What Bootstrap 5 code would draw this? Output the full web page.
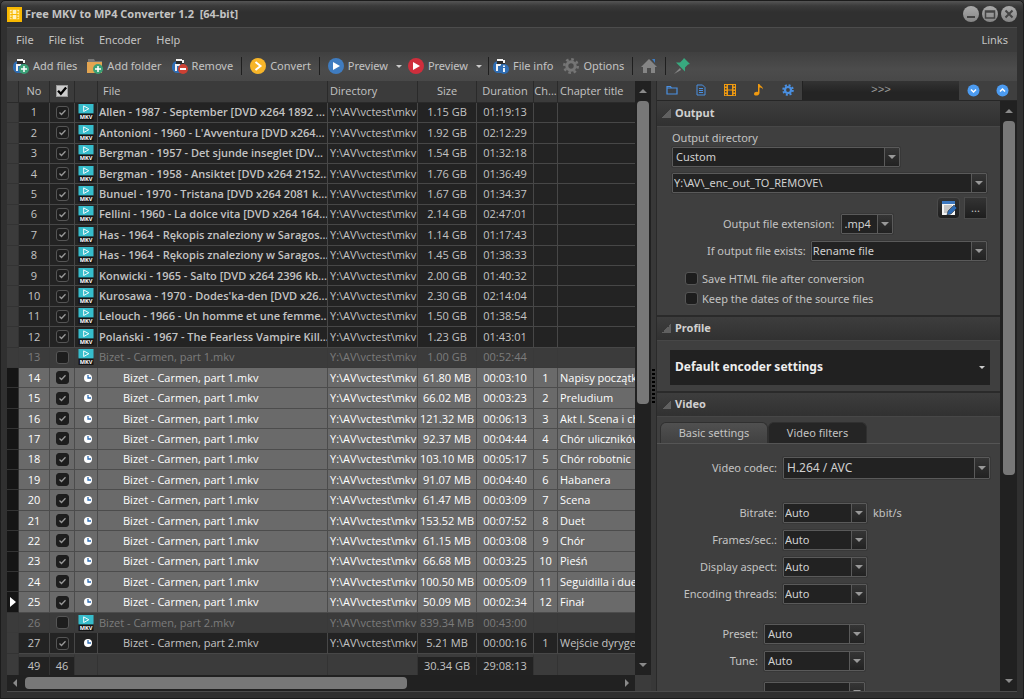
<!DOCTYPE html>
<html lang="en">
<head>
<meta charset="utf-8">
<meta name="viewport" content="width=device-width, initial-scale=1">
<title>Free MKV to MP4 Converter</title>
<link href="https://cdn.jsdelivr.net/npm/bootstrap@5.3.0/dist/css/bootstrap.min.css" rel="stylesheet">
<style>
:root{--txt:#c3c3c3;--dark:#232323;--panel:#3f3f3f}
body{background:#303030;color:var(--txt);font-family:"Noto Sans","Open Sans",sans-serif;font-size:11px;line-height:16px}
svg{display:block;flex:none}
button,select,input{font:inherit;color:inherit}
.win{border:1px solid #1c1c1c;border-radius:5px 5px 0 0;padding:0 6px 6px;background:linear-gradient(#555,#3a3a3a 5px,#303030 11px,#303030)}
.title-row{height:27px;font-weight:700;gap:3px}
.title-row span{white-space:pre}
.wbtn{width:16px;height:16px;border:0;padding:0;border-radius:50%;background:linear-gradient(#aaa,#858585)}
.client{background:var(--panel);border:solid #4c4c4c;border-width:1px 0 1px 0;min-height:0}
.menus{height:24px;background:#3b3b3b;padding:0 9px;gap:15px}
.menus a{color:var(--txt);text-decoration:none}
.tools{height:30px;background:linear-gradient(#404040,#4c4c4c 60%,#484848);padding:0 6px}
.tb{border:0;background:none;padding:0;display:flex;align-items:center;gap:4px;white-space:nowrap;height:22px}
.gapr{margin-right:10px}
.drop{padding:0 6px 0 8px}
.vsep{width:1px;height:18px;background:#1f1f1f;flex:none}
.car{border:3px solid transparent;border-top-color:#ccc;border-bottom:0;height:0;width:0}
.split{min-height:0}
.listpane{background:#3b3b3b;min-width:0}
.gridwrap{min-height:0;min-width:0;overflow:hidden}
.files{width:100%;height:100%;table-layout:fixed;border-collapse:separate;border-spacing:0;color:var(--txt);font-family:"Open Sans","Noto Sans",sans-serif}
.files th,.files td{padding:0;text-align:center;white-space:nowrap;overflow:hidden;border-right:1px solid #474747;border-bottom:1px solid #474747;line-height:16px;font-weight:400}
.files td{background:var(--dark)}
.files thead th{background:#3b3b3b;border-color:#2a2a2a;height:22px}
.files .l{text-align:left;padding-left:5px}
.files .dir{padding-left:2px}
.files .ttl{padding-left:2px}
.files th:last-child,.files td:last-child{border-right:0}
.files .nm{font-weight:600;padding-left:1px}
.files .sub{font-weight:400;padding-left:25px}
.files .ind{background:#3b3b3b;border-color:#333}
.files .sel td{background:#6a6a6a;color:#fff;border-color:#4c4c4c}
.files .sel .ind{background:#151515;border-color:#333}
.files .off td{background:#3b3b3b;color:#7c7c7c;border-color:#393939}
.files .off .nm{font-weight:400}
.files tfoot td{border-top:3px solid #3b3b3b;border-bottom:0;background:#3b3b3b;border-right-color:#333;height:21px}
.files tfoot .tot{background:#222}
.files svg{margin:auto}
.cb{appearance:none;display:block;margin:auto;width:13px;height:13px;border:1px solid #555;border-radius:3px;background:#1d1d1d center/11px no-repeat}
.cb:checked{background-image:url("data:image/svg+xml,%3Csvg xmlns='http://www.w3.org/2000/svg' viewBox='0 0 11 11'%3E%3Cpath d='M2.500 5.500l2 2 4-4.200' fill='none' stroke='%23999' stroke-width='1.300'/%3E%3C/svg%3E")}
.cb.all{width:12px;height:12px;border:1px solid #999;border-radius:0;background-color:#ccc}
.cb.all:checked{background-image:url("data:image/svg+xml,%3Csvg xmlns='http://www.w3.org/2000/svg' viewBox='0 0 11 11'%3E%3Cpath d='M1.500 5l2.700 3 5-6' fill='none' stroke='%23000' stroke-width='2.200'/%3E%3C/svg%3E")}
.sel .cb{border-color:#1d1d1d}
.vbar{background:#212121;display:flex;flex-direction:column;align-items:center;flex:none}
.bar-a,.corner{width:16px}
.bar-b{width:17px}
.thumb{background:#787878;border-radius:4px}
.vbar .thumb{width:12px}
.bar-a .thumb{height:51%}
.bar-b .thumb{height:60%}
.tri{width:0;height:0;border:4px solid transparent;flex:none}
.tri.up{border-bottom-color:#8a8a8a;border-top:0}
.tri.dn{border-top-color:#8a8a8a;border-bottom:0}
.tri.lt{border-right-color:#8a8a8a;border-left:0}
.tri.rt{border-left-color:#8a8a8a;border-right:0}
.hbar{height:16px;background:#212121;padding:0 6px}
.hbar .thumb{height:12px;width:62%}
.grip{width:6px;background:#383838;border-right:1px solid #2a2a2a;flex:none}
.grip i{width:3px;height:34px;background:repeating-linear-gradient(#000 0 2px,transparent 2px 4px)}
.side{width:360px;min-height:0;flex:none}
.nav-ic{height:20px;border-bottom:1px solid #262626}
.nav-ic button{border:0;background:none;padding:0;width:29px;height:19px;display:flex;align-items:center;justify-content:center}
.nav-ic .more{flex:1;background:linear-gradient(#333,#242424 60%);color:#999;font-family:"Liberation Mono",monospace;border-left:1px solid #222}
.formarea{min-height:0;overflow:hidden}
.sec{height:26px;margin:0;padding-left:5px;gap:4px;font-size:11px;line-height:16px;font-weight:700;color:#d0d0d0;background:linear-gradient(#3d3d3d,#313131);border-bottom:1px solid #474747}
.sec.line{border-top:2px solid #2a2a2a}
.sec i{background:linear-gradient(135deg,transparent 50%,#606060 50%);width:9px;height:9px}
.cmb{appearance:none;height:20px;padding:0 17px 0 3px;border:1px solid #5a5a5a;border-radius:1px;color:#d0d0d0;line-height:16px;outline:1px solid #383838;background:url("data:image/svg+xml,%3Csvg xmlns='http://www.w3.org/2000/svg' width='8' height='4'%3E%3Cpath d='M0 0h8l-4 4z' fill='%23999'/%3E%3C/svg%3E") right 3px center no-repeat,linear-gradient(#5a5a5a,#5a5a5a) right 14px top/1px 100% no-repeat,linear-gradient(#353535,#222) right top/14px 100% no-repeat,#222}
.cmb.tight{padding-left:1px}
.lab{text-align:right}
.sq{width:23px;height:22px;border:1px solid #4a4a4a;background:linear-gradient(#333,#1e1e1e);padding:0;display:flex;align-items:center;justify-content:center}
.outp{padding:3px 13px 0 15px;height:188px}
.odir{width:228px;margin-top:1px}
.path{margin-top:6px}
.ext{gap:6px;margin-left:51px;margin-top:-5px}
.ext .cmb{width:52px}
.exi{gap:5px;margin:7px 0 10px 35px}
.chk{gap:4px;margin:0 0 4px 13px}
.profile{height:50px;padding:9px 10px 0 13px}
.profile button{width:100%;height:35px;background:#212121;border:0;font-weight:700;font-size:12px;color:#eee;padding:0 5px}
.ptabs{padding:5px 3px 0;border-bottom:1px solid #555}
.ptabs button{border:1px solid #303030;border-bottom:0;border-radius:6px 6px 0 0;height:21px;padding:0}
.ptabs .on{width:108px;background:linear-gradient(#505050,#414141)}
.ptabs .of{width:99px;background:#252525}
.vform{padding:13px 10px 0 0}
.vrow{display:flex;align-items:center;gap:6px}
.vrow .lab{width:120px}
.codec{margin-bottom:24px}
.codec .cmb{height:22px;flex:1;font-size:12px}
.q{margin-bottom:7px}
.q .cmb{width:84px}
.last{margin-bottom:20px}
.near{margin-bottom:7px}
.near .lab{width:101px}
.near .cmb{width:101px}
.grp{margin-bottom:11px}
</style>
</head>
<body>
<div class="win vh-100 d-flex flex-column">
  <header class="title-row d-flex align-items-center">
    <svg width="15" height="15" viewBox="0 0 16 16"><path fill="#f8b800" d="M0 0h16v16H0z"/><path fill="#fff3c4" d="M3 3h10v10H3z"/><path fill="#f8b800" d="M5 3h1v10H5zM10 3h1v10h-1zM5 7.500h6v1H5zM3.500 4.500H5V6H3.500zM3.500 7.500H5V9H3.500zM3.500 10.500H5V12H3.500zM11 4.500h1.500V6H11zM11 7.500h1.500V9H11zM11 10.500h1.500V12H11z"/></svg>
    <span class="flex-grow-1">Free MKV to MP4 Converter 1.2  [64-bit]</span>
    <button class="wbtn" aria-label="Minimize"><svg width="16" height="16"><path d="M4 11h8" stroke="#444" stroke-width="2"/></svg></button>
    <button class="wbtn" aria-label="Maximize"><svg width="16" height="16"><path d="M3.500 5h9v7h-9zM3.500 6h9" fill="none" stroke="#444" stroke-width="1.500"/></svg></button>
    <button class="wbtn" aria-label="Close"><svg width="16" height="16"><path d="M4.500 4.500l7 7m0-7l-7 7" stroke="#444" stroke-width="2"/></svg></button>
  </header>
  <div class="client flex-grow-1 d-flex flex-column">
    <nav class="menus d-flex align-items-center">
      <a href="#">File</a><a href="#">File list</a><a href="#">Encoder</a><a href="#">Help</a><a href="#" class="ms-auto">Links</a>
    </nav>
    <div class="tools d-flex align-items-center" id="tools"></div>
    <div class="split d-flex flex-grow-1">
      <section class="listpane flex-grow-1 d-flex flex-column">
        <div class="split d-flex flex-grow-1">
          <div class="gridwrap flex-grow-1">
            <table class="files">
              <colgroup><col width="12"><col width="31"><col width="25"><col width="23"><col><col width="90"><col width="59"><col width="57"><col width="24"><col width="77"></colgroup>
              <thead><tr><th></th><th>No</th><th><input type="checkbox" class="cb all" checked aria-label="Select all"></th><th></th><th class="l">File</th><th class="l dir">Directory</th><th>Size</th><th>Duration</th><th>Ch...</th><th class="l ttl">Chapter title</th></tr></thead>
              <tbody id="rows"></tbody>
              <tfoot><tr><td></td><td class="tot">49</td><td class="tot">46</td><td></td><td></td><td></td><td class="tot">30.34 GB</td><td class="tot">29:08:13</td><td></td><td></td></tr></tfoot>
            </table>
          </div>
          <div class="vbar bar-a"><i class="tri up my-2"></i><div class="thumb"></div><i class="tri dn mt-auto mb-2"></i></div>
        </div>
        <div class="d-flex"><div class="hbar flex-grow-1 d-flex align-items-center"><i class="tri lt me-2"></i><div class="thumb"></div><i class="tri rt ms-auto"></i></div><div class="corner"></div></div>
      </section>
      <div class="grip d-flex align-items-center justify-content-center"><i></i></div>
      <aside class="side d-flex flex-column">
        <div class="nav-ic d-flex">
          <button aria-label="Output"><svg width="12" height="12" viewBox="0 0 12 12" fill="none" stroke="#4a90e2" stroke-width="1.200"><path d="M1 2.500h3.500l1 1.500H11v6H1zM1 4h5"/></svg></button>
          <button aria-label="Profile"><svg width="12" height="12" viewBox="0 0 12 12" fill="none" stroke="#4a90e2"><path d="M2 1h5.500L10 3.500V11H2zM4 4.500h4M4 6.500h4M4 8.500h4"/></svg></button>
          <button aria-label="Video"><svg width="12" height="12" viewBox="0 0 12 12"><path fill="#f09a10" d="M0 0h12v12H0z"/><path fill="#3f3f3f" d="M4 1h4v4.400H4zM4 6.600h4V11H4zM1 1h1.500v1.600H1zM1 4h1.500v1.600H1zM1 7h1.500v1.600H1zM1 10h1.500v1.200H1zM9.500 1H11v1.600H9.500zM9.500 4H11v1.600H9.500zM9.500 7H11v1.600H9.500zM9.500 10H11v1.200H9.500z"/></svg></button>
          <button aria-label="Audio"><svg width="12" height="12" viewBox="0 0 12 12"><path fill="#f09a10" d="M5 0h1.500c.3 2 3.500 2 3.500 5.500-.6-1.500-2-2-3.500-2V9c0 3-5.500 3.500-5.500 1C1 8 3.500 7.300 5 8z"/></svg></button>
          <button aria-label="Settings"><svg width="12" height="12" viewBox="0 0 12 12"><circle cx="6" cy="6" r="3" fill="none" stroke="#4a90e2" stroke-width="2.200"/><circle cx="6" cy="6" r="4.800" fill="none" stroke="#4a90e2" stroke-width="2" stroke-dasharray="2 1.770"/></svg></button>
          <button class="more">&gt;&gt;&gt;</button>
          <button aria-label="Expand all"><svg width="13" height="13" viewBox="0 0 13 13"><circle cx="6.500" cy="6.500" r="6" fill="#4c9bf0"/><path d="M4 5.500L6.500 8 9 5.500" fill="none" stroke="#fff" stroke-width="1.500"/></svg></button>
          <button aria-label="Collapse all"><svg width="13" height="13" viewBox="0 0 13 13"><circle cx="6.500" cy="6.500" r="6" fill="#4c9bf0"/><path d="M4 7.500L6.500 5 9 7.500" fill="none" stroke="#fff" stroke-width="1.500"/></svg></button>
        </div>
        <div class="split d-flex flex-grow-1">
          <form class="formarea flex-grow-1">
            <h2 class="sec d-flex align-items-center"><i></i>Output</h2>
            <div class="outp">
              <label for="od" class="d-block">Output directory</label>
              <select id="od" class="cmb d-block odir"><option>Custom</option></select>
              <input class="cmb tight d-block w-100 path" aria-label="Path" value="Y:\AV\_enc_out_TO_REMOVE\">
              <div class="d-flex justify-content-end gap-1 mt-1">
                <button type="button" class="sq rounded-1" aria-label="Edit"><svg width="16" height="16" viewBox="0 0 16 16"><path fill="#f4f4f4" d="M1 1h13v14H1z"/><path fill="#3c78c0" d="M1 1h13v3H1z"/><path d="M3 6h8M3 8h8M3 10h6M3 12h4" stroke="#999"/><path fill="#2d6bb5" stroke="#1c1c1c" stroke-width=".5" d="M6 15l1-4 6-6 3 3-6 6z"/></svg></button>
                <button type="button" class="sq">...</button>
              </div>
              <div class="d-flex align-items-center ext"><label for="ex" class="lab">Output file extension:</label><select id="ex" class="cmb"><option>.mp4</option></select></div>
              <div class="d-flex align-items-center exi"><label for="ei" class="lab">If output file exists:</label><select id="ei" class="cmb tight flex-grow-1"><option>Rename file</option></select></div>
              <div class="d-flex align-items-center chk"><input type="checkbox" id="c1" class="cb m-0"><label for="c1">Save HTML file after conversion</label></div>
              <div class="d-flex align-items-center chk"><input type="checkbox" id="c2" class="cb m-0"><label for="c2">Keep the dates of the source files</label></div>
            </div>
            <h2 class="sec line d-flex align-items-center"><i></i>Profile</h2>
            <div class="profile"><button type="button" class="d-flex align-items-center justify-content-between">Default encoder settings<span class="car"></span></button></div>
            <h2 class="sec line d-flex align-items-center"><i></i>Video</h2>
            <div class="ptabs d-flex"><button type="button" class="on">Basic settings</button><button type="button" class="of">Video filters</button></div>
            <div class="vform" id="vform"></div>
          </form>
          <div class="vbar bar-b"><i class="tri up my-2"></i><div class="thumb"></div><i class="tri dn mt-auto mb-2"></i></div>
        </div>
      </aside>
    </div>
  </div>
</div>
<script src="https://cdn.jsdelivr.net/npm/bootstrap@5.3.0/dist/js/bootstrap.bundle.min.js"></script>
<script>
const doc = '<path fill="#2f6db3" d="M0 9a6 6 0 0 1 5-6h4l1 12H4a6 6 0 0 1-4-6z"/><path fill="#2b2b2b" d="M4 2h8v4H4z"/><path fill="#f2f2f2" d="M4 1h6v2H4zM10 2h2v3h-2z"/><path fill="#f2f2f2" d="M3 6h2v7H3zM5 6h3v2H5z"/>';
const art = {
  addf: doc + '<circle cx="11" cy="11" r="5" fill="#3aa076"/><path d="M11 8v6M8 11h6" stroke="#fff" stroke-width="1.500"/>',
  fold: '<path fill="#777" d="M1 1h6l1 2h7v3H1z"/><path fill="#e3a551" d="M0 4h15v11H0z"/><circle cx="11" cy="11" r="5" fill="#3aa076"/><path d="M11 8v6M8 11h6" stroke="#fff" stroke-width="1.500"/>',
  rem: doc + '<circle cx="11" cy="11" r="5" fill="#cc4033"/><path d="M8 11h6" stroke="#fff" stroke-width="2"/>',
  conv: '<circle cx="8" cy="8" r="8" fill="#f7b529"/><path d="M5.500 4l5 4-5 4" fill="none" stroke="#fff" stroke-width="2"/>',
  pb: '<circle cx="8" cy="8" r="8" fill="#3f7cc0"/><path d="M5 4l7 4-7 4z" fill="#fff"/>',
  pr: '<circle cx="8" cy="8" r="8" fill="#cf2e3c"/><path d="M5 4l7 4-7 4z" fill="#fff"/>',
  info: doc + '<circle cx="11" cy="11" r="5" fill="#2f6db3"/><path d="M11 7.500v1.500M11 10v4" stroke="#fff" stroke-width="1.800"/>',
  gear: '<circle cx="8" cy="8" r="4.200" fill="none" stroke="#757575" stroke-width="3"/><circle cx="8" cy="8" r="6.700" fill="none" stroke="#757575" stroke-width="2.600" stroke-dasharray="2.630 2.630"/>',
  home: '<path fill="#858585" d="M8 1l8 8h-2v6h-4v-5H6v5H2V9H0z"/><path fill="#3f7cc0" d="M11 1h3v4z"/>',
  pin: '<path d="M6 10l-6 6 7-4z" fill="#888"/><path fill="#38a97f" d="M10 0l6 6-2 .5-3 3 0 4-9-9 4 0 3-3z"/>'
};
const ico = k => `<svg width="16" height="16" viewBox="0 0 16 16">${art[k]}</svg>`;
const sep = w => `<span class="vsep ${w}"></span>`;
const tb = (k, t, c = '') => `<button class="tb ${c}" ${t ? '' : `aria-label="${k}"`}>${ico(k)}${t}</button>`;
const caret = '<button class="tb drop" aria-label="More"><span class="car"></span></button>';
document.getElementById('tools').innerHTML =
  tb('addf', 'Add files', 'gapr') + tb('fold', 'Add folder', 'gapr') + tb('rem', 'Remove') + sep('mx-2') +
  tb('conv', 'Convert') + sep('mx-2') + tb('pb', 'Preview') + caret + tb('pr', 'Preview') + caret + sep('me-1') +
  tb('info', 'File info', 'gapr') + tb('gear', 'Options') + sep('mx-2') + tb('home', '') + sep('mx-2') + tb('pin', '');

const films = [
  ['Allen - 1987 - September [DVD x264 1892 ...', '1.15 GB', '01:19:13'],
  ["Antonioni - 1960 - L'Avventura [DVD x264...", '1.92 GB', '02:12:29'],
  ['Bergman - 1957 - Det sjunde inseglet [DV...', '1.54 GB', '01:32:18'],
  ['Bergman - 1958 - Ansiktet [DVD x264 2152...', '1.76 GB', '01:36:49'],
  ['Bunuel - 1970 - Tristana [DVD x264 2081 k...', '1.67 GB', '01:34:37'],
  ['Fellini - 1960 - La dolce vita [DVD x264 164...', '2.14 GB', '02:47:01'],
  ['Has - 1964 - Rękopis znaleziony w Saragos...', '1.14 GB', '01:17:43'],
  ['Has - 1964 - Rękopis znaleziony w Saragos...', '1.45 GB', '01:38:33'],
  ['Konwicki - 1965 - Salto [DVD x264 2396 kb...', '2.00 GB', '01:40:32'],
  ["Kurosawa - 1970 - Dodes'ka-den [DVD x26...", '2.30 GB', '02:14:04'],
  ['Lelouch - 1966 - Un homme et une femme...', '1.50 GB', '01:38:54'],
  ['Polański - 1967 - The Fearless Vampire Kill...', '1.23 GB', '01:43:01'],
  ['Bizet - Carmen, part 1.mkv', '1.00 GB', '00:52:44', 'off'],
  ['', '61.80 MB', '00:03:10', 'sel', 1, 'Napisy początkowe'],
  ['', '66.02 MB', '00:03:23', 'sel', 2, 'Preludium'],
  ['', '121.32 MB', '00:06:13', 'sel', 3, 'Akt I. Scena i chór'],
  ['', '92.37 MB', '00:04:44', 'sel', 4, 'Chór uliczników'],
  ['', '103.10 MB', '00:05:17', 'sel', 5, 'Chór robotnic'],
  ['', '91.07 MB', '00:04:40', 'sel', 6, 'Habanera'],
  ['', '61.47 MB', '00:03:09', 'sel', 7, 'Scena'],
  ['', '153.52 MB', '00:07:52', 'sel', 8, 'Duet'],
  ['', '61.15 MB', '00:03:08', 'sel', 9, 'Chór'],
  ['', '66.68 MB', '00:03:25', 'sel', 10, 'Pieśń'],
  ['', '100.50 MB', '00:05:09', 'sel', 11, 'Seguidilla i duet'],
  ['', '50.09 MB', '00:02:34', 'sel', 12, 'Finał'],
  ['Bizet - Carmen, part 2.mkv', '839.34 MB', '00:43:00', 'off'],
  ['', '5.21 MB', '00:00:16', 'part2', 1, 'Wejście dyrygenta']
];
const mkv = '<svg width="16" height="16" viewBox="0 0 16 17"><path fill="#151515" d="M0 9h16v8H0z"/><path fill="#36bccb" d="M0 0h16v10H0z"/><path d="M5.500 2l5.500 3-5.500 3z" fill="none" stroke="#fff"/><text x="8" y="16" text-anchor="middle" font-size="6" font-weight="700" fill="#fff">MKV</text></svg>';
const clock = '<svg width="16" height="16" viewBox="0 0 16 16"><circle cx="10" cy="8" r="4" fill="#fff"/><path d="M10 5v3h3" fill="none" stroke="#2f6db3" stroke-width="1.300"/></svg>';
const mark = '<svg width="6" height="10"><path d="M0 0l6 5-6 5z" fill="#fff"/></svg>';
document.getElementById('rows').innerHTML = films.map(([n, s, d, c = '', ch = '', t = ''], i) =>
  `<tr class="${c}"><td class="ind">${i === 24 ? mark : ''}</td><td>${i + 1}</td><td><input type="checkbox" class="cb" aria-label="Row ${i + 1}" ${c === 'off' ? '' : 'checked'}></td><td>${n ? mkv : clock}</td><td class="l nm ${n ? '' : 'sub'}">${n || `Bizet - Carmen, part ${c === 'sel' ? 1 : 2}.mkv`}</td><td class="l dir">Y:\\AV\\vctest\\mkv</td><td>${s}</td><td>${d}</td><td>${ch}</td><td class="l ttl">${t}</td></tr>`).join('');

const fields = [['Video codec:', 'H.264 / AVC', 'codec'], ['Bitrate:', 'Auto', 'q', 'kbit/s'], ['Frames/sec.:', 'Auto', 'q'], ['Display aspect:', 'Auto', 'q'], ['Encoding threads:', 'Auto', 'q last'], ['Preset:', 'Auto', 'near'], ['Tune:', 'Auto', 'near grp'], ['', '', 'near']];
document.getElementById('vform').innerHTML = fields.map(([l, v, c, u = ''], i) =>
  `<div class="vrow ${c}"><label class="lab" for="v${i}">${l}</label><select id="v${i}" class="cmb ${c[0] === 'q' ? 'tight' : ''}"><option>${v}</option></select>${u}</div>`).join('');
</script>
</body>
</html>
